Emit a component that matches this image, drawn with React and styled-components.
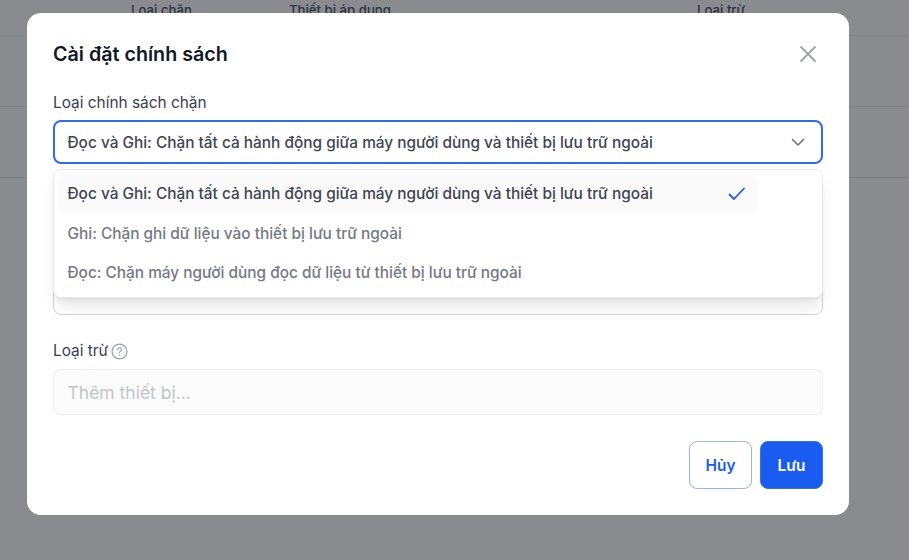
import React from 'react';
import styled, { createGlobalStyle } from 'styled-components';

const GlobalStyle = createGlobalStyle`
  html, body {
    margin: 0;
    padding: 0;
    height: 100%;
    overflow: hidden;
    background: #fff;
    font-family: Inter, "Liberation Sans", sans-serif;
  }
`;

const Page = styled.div`
  height: 560px;
  background: #fff;
`;

const TableHead = styled.div`
  display: grid;
  grid-template-columns: 158px 408px 1fr;
  height: 36px;
  padding-left: 131px;
  box-sizing: border-box;
  border-bottom: 1px solid #e5e7eb;
  font-size: 13.2px;
  font-weight: 500;
  line-height: 21px;
  color: #4b5563;
`;

const TableRow = styled.div`
  height: 71px;
  box-sizing: border-box;
  border-bottom: 1px solid #e5e7eb;
`;

const Backdrop = styled.div`
  position: fixed;
  inset: 0;
  background: rgba(17, 19, 26, 0.49);
`;

const Modal = styled.div`
  position: fixed;
  left: 27px;
  top: 13px;
  width: 822px;
  height: 502px;
  box-sizing: border-box;
  padding: 26px;
  background: #fff;
  border-radius: 14px;
  display: flex;
  flex-direction: column;
`;

const Header = styled.div`
  display: flex;
  justify-content: space-between;
  align-items: center;
  height: 30px;
  margin-bottom: 24px;
`;

const Title = styled.h2`
  margin: 0;
  font-size: 19.7px;
  font-weight: 600;
  line-height: 30px;
  color: #111827;
`;

const CloseButton = styled.button`
  display: flex;
  width: 24px;
  height: 24px;
  padding: 0;
  margin-right: 3px;
  border: 0;
  background: none;
  color: #9ca3af;
`;

const Field = styled.div`
  position: relative;
  margin-bottom: ${(p) => p.$gap || 0}px;
`;

const Label = styled.label`
  display: flex;
  align-items: center;
  gap: 3px;
  height: ${(p) => (p.$withIcon ? 22 : 20)}px;
  margin-bottom: 7px;
  font-size: 15.4px;
  font-weight: 400;
  line-height: 20px;
  color: #374151;
`;

const Select = styled.div`
  display: flex;
  align-items: center;
  justify-content: space-between;
  height: 44px;
  box-sizing: border-box;
  padding: 0 14px 0 12.5px;
  border: 2px solid #2f6bf0;
  border-radius: 8px;
  font-size: 15.4px;
  font-weight: 500;
  color: #3d4553;
`;

const Chevron = styled.span`
  display: flex;
  color: #6b7280;
`;

const Dropdown = styled.ul`
  position: absolute;
  z-index: 2;
  left: 0;
  right: 0;
  top: 76px;
  margin: 0;
  padding: 4px;
  list-style: none;
  height: 129px;
  box-sizing: border-box;
  background: #fff;
  border: 1px solid #e5e7eb;
  border-radius: 8px;
  box-shadow: 0 11px 16px -3px rgba(0, 0, 0, 0.1), 0 4px 7px -4px rgba(0, 0, 0, 0.1);
`;

const Option = styled.li`
  display: flex;
  align-items: center;
  justify-content: space-between;
  width: 700px;
  height: 39.6px;
  box-sizing: border-box;
  padding: 0 11px 0 9.5px;
  border-radius: 8px;
  font-size: 15.4px;
  font-weight: 500;
  background: ${(p) => (p.$selected ? '#fafafa' : 'transparent')};
  color: ${(p) => (p.$selected ? '#3d4553' : '#737985')};
`;

const DeviceInput = styled.div`
  height: ${(p) => p.$height}px;
  box-sizing: border-box;
  padding: ${(p) => (p.$covered ? '0 14px 14px' : '2px 13.5px 0')};
  display: flex;
  align-items: ${(p) => (p.$covered ? 'flex-end' : 'center')};
  border: 1px solid ${(p) => (p.$muted ? '#ebedf0' : '#d1d5db')};
  border-radius: 8px;
  background: ${(p) => (p.$muted ? '#fbfbfc' : '#fff')};
  font-size: ${(p) => (p.$covered ? 15.4 : 17.5)}px;
  line-height: 22px;
  color: ${(p) => (p.$muted ? '#c1c4cb' : '#6b7280')};
`;

const Footer = styled.div`
  display: flex;
  justify-content: flex-end;
  gap: 8px;
  margin-top: auto;
`;

const Button = styled.button`
  height: 48px;
  width: 63px;
  box-sizing: border-box;
  border-radius: 8px;
  font-family: inherit;
  font-size: 15.4px;
  font-weight: 600;
  padding: 0;
  border: 1px solid ${(p) => (p.$primary ? '#3b6fe0' : '#93b4f5')};
  background: ${(p) => (p.$primary ? '#1a5cf0' : '#fff')};
  color: ${(p) => (p.$primary ? '#fff' : '#1a5cf0')};
`;

const App = () => {
  return (
    <>
      <GlobalStyle />
      <Page>
        <TableHead>
          <span>Loại chặn</span>
          <span>Thiết bị áp dụng</span>
          <span>Loại trừ</span>
        </TableHead>
        <TableRow />
        <TableRow />
      </Page>
      <Backdrop />
      <Modal>
        <Header>
          <Title>Cài đặt chính sách</Title>
          <CloseButton>
            <svg width="24" height="24" viewBox="0 0 24 24" fill="none" stroke="currentColor" strokeWidth="1.8" strokeLinecap="round">
              <path d="M5 5l14 14M19 5L5 19" />
            </svg>
          </CloseButton>
        </Header>
        <Field $gap={26}>
          <Label>Loại chính sách chặn</Label>
          <Select>
            Đọc và Ghi: Chặn tất cả hành động giữa máy người dùng và thiết bị lưu trữ ngoài
            <Chevron>
              <svg width="18" height="18" viewBox="0 0 18 18" fill="none" stroke="currentColor" strokeWidth="1.6" strokeLinecap="round" strokeLinejoin="round">
                <path d="M3.5 6.5L9 12l5.5-5.5" />
              </svg>
            </Chevron>
          </Select>
          <Dropdown>
            <Option $selected>
              Đọc và Ghi: Chặn tất cả hành động giữa máy người dùng và thiết bị lưu trữ ngoài
              <svg width="20" height="20" viewBox="0 0 20 20" fill="none" stroke="#1a5cf0" strokeWidth="1.8" strokeLinecap="round" strokeLinejoin="round">
                <path d="M2.5 10.5L7 15 17 4.5" />
              </svg>
            </Option>
            <Option>Ghi: Chặn ghi dữ liệu vào thiết bị lưu trữ ngoài</Option>
            <Option>Đọc: Chặn máy người dùng đọc dữ liệu từ thiết bị lưu trữ ngoài</Option>
          </Dropdown>
        </Field>
        <Field $gap={25}>
          <Label>Thiết bị áp dụng</Label>
          <DeviceInput $height={98} $covered>Thêm thiết bị...</DeviceInput>
        </Field>
        <Field>
          <Label $withIcon>
            Loại trừ
            <svg width="17" height="17" viewBox="0 0 16 16" fill="none" stroke="#9ca3af" strokeWidth="1.2" strokeLinecap="round">
              <circle cx="8" cy="8" r="7" />
              <path d="M6.2 6.2a1.8 1.8 0 1 1 2.7 1.6c-.6.3-.9.7-.9 1.3" />
              <path d="M8 11.3v.1" />
            </svg>
          </Label>
          <DeviceInput $height={46} $muted>Thêm thiết bị...</DeviceInput>
        </Field>
        <Footer>
          <Button>Hủy</Button>
          <Button $primary>Lưu</Button>
        </Footer>
      </Modal>
    </>
  );
};

export default App;
